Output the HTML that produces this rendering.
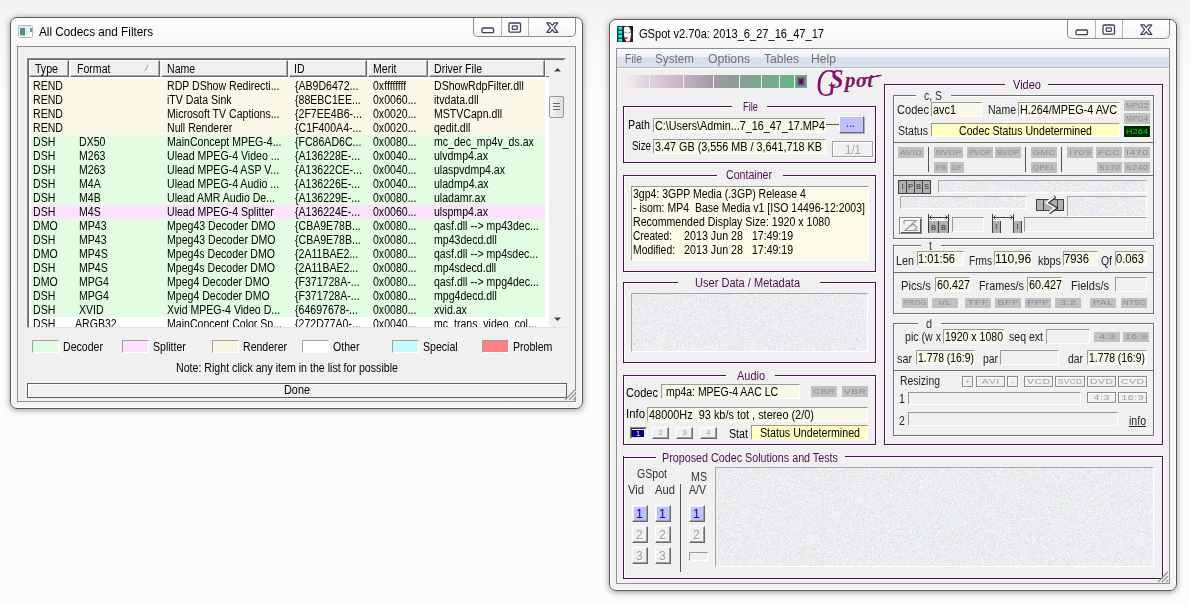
<!DOCTYPE html>
<html lang="en"><head><meta charset="utf-8"><title>GSpot</title><style>
html,body{margin:0;padding:0;background:#fff;}
body{width:1190px;height:606px;overflow:hidden;position:relative;font-family:"Liberation Sans",sans-serif;background:linear-gradient(#f1f1f1 0,#f9f9f9 45px,#fcfcfc 90px,#fcfcfc 100%);}
body *{position:absolute;box-sizing:content-box;}
.t{font:12px/14px "Liberation Sans",sans-serif;white-space:pre;transform-origin:0 0;color:#000;}
.ti{font:12px/15px "Liberation Sans",sans-serif;white-space:pre;transform-origin:0 0;color:#000;}
.bd{overflow:hidden;}
.bd b{position:absolute;left:-10px;right:-10px;top:50%;margin-top:-5px;text-align:center;font:normal 7.5px/10px "Liberation Sans",sans-serif;letter-spacing:.4px;text-indent:.4px;}
.logo{font:italic 17px/1 "Liberation Serif",serif;color:#86106a;white-space:pre;}
</style></head><body>
<svg width="0" height="0" style="left:0;top:0"><filter id="nzf" x="0" y="0" width="100%" height="100%" color-interpolation-filters="sRGB"><feTurbulence type="fractalNoise" baseFrequency="1.9 2.3" numOctaves="2" seed="7"/><feColorMatrix type="matrix" values="0.3 0 0 0 0.775  0 0.3 0 0 0.775  0 0 0.26 0 0.81  0 0 0 0 1"/></filter></svg>
<div style="left:10px;top:17px;width:571px;height:390px;border:1px solid #5a5a5a;border-radius:7px;background:linear-gradient(#fdfdfd,#f6f6f6 30px,#f3f3f3);box-shadow:0 1px 6px 0 rgba(0,0,0,.42), inset 0 0 0 1px #fff;"></div>
<div style="left:17px;top:46px;width:557px;height:354px;border:1px solid #8f8f8f;background:#f0f0f0;"></div>
<div style="left:473px;top:18px;width:101px;height:18px;border:1px solid #8c8c8c;border-top:none;border-radius:0 0 5px 5px;background:linear-gradient(#fff,#f6f6f6);box-shadow:0 1px 0 rgba(255,255,255,.8);"></div>
<div style="left:501px;top:18px;width:1px;height:18px;background:#b4b4b4;"></div>
<div style="left:528px;top:18px;width:1px;height:18px;background:#b4b4b4;"></div>
<svg style="left:480.5px;top:26.5px" width="14" height="7" viewBox="0 0 14 7"><rect x="1" y="1" width="11.500" height="4.600" rx="1.200" fill="#fff" stroke="#3c4258" stroke-width="1.300"/></svg>
<svg style="left:507.5px;top:21.5px" width="14" height="12" viewBox="0 0 14 12"><rect x="1" y="1" width="11.500" height="9.200" rx="1.200" fill="#fff" stroke="#3c4258" stroke-width="1.300"/><rect x="4.300" y="3.900" width="5" height="3.400" rx=".5" fill="#fff" stroke="#3c4258" stroke-width="1.200"/></svg>
<svg style="left:545.5px;top:21.5px" width="13" height="12" viewBox="0 0 13 12"><path d="M0.800 0.800h3.400l2.100 2.700 2.100-2.700h3.400l-3.700 4.800 3.700 4.800h-3.400l-2.100-2.700-2.100 2.700h-3.400l3.700-4.800z" fill="#fff" stroke="#3c4258" stroke-width="1.200" stroke-linejoin="round"/></svg>
<svg style="left:18px;top:25px" width="15" height="13" viewBox="0 0 15 13"><rect x="0.500" y="0.500" width="14" height="12" rx="1" fill="#fdfdfd" stroke="#b0b8c6"/><rect x="1" y="1" width="13" height="1.500" fill="#dfe4ec"/><defs><linearGradient id="ig" x1="0" y1="0" x2="0" y2="1"><stop offset="0" stop-color="#4d80ad"/><stop offset="1" stop-color="#49a25c"/></linearGradient></defs><rect x="2" y="3" width="5" height="7.500" fill="url(#ig)"/><rect x="8" y="3" width="2.500" height="7.500" fill="#e4e4e4"/><rect x="12" y="3" width="1.800" height="4" fill="url(#ig)"/></svg>
<span class="ti" style="left:39px;top:25px;transform:scaleX(0.977);">All Codecs and Filters</span>
<div style="left:27px;top:58px;width:537px;height:268px;border:1px solid #868686;border-right-color:#e3e3e3;border-bottom-color:#e3e3e3;background:#fff;overflow:hidden;"></div>
<div style="left:28px;top:59px;width:536px;height:0px;border-top:1px solid #696969;"></div>
<div style="left:28px;top:59px;width:0px;height:268px;border-left:1px solid #696969;"></div>
<div style="left:29px;top:60px;width:517px;height:17px;background:#f0f0f0;"></div>
<div style="left:29px;top:60px;width:38px;height:15px;border:1px solid #fff;border-right-color:#696969;border-bottom-color:#696969;box-shadow:inset -1px -1px 0 #a8a8a8;background:#f0f0f0;"></div>
<span class="t" style="left:35px;top:62px;transform:scaleX(0.880);">Type</span>
<div style="left:70px;top:60px;width:88px;height:15px;border:1px solid #fff;border-right-color:#696969;border-bottom-color:#696969;box-shadow:inset -1px -1px 0 #a8a8a8;background:#f0f0f0;"></div>
<span class="t" style="left:77px;top:62px;transform:scaleX(0.880);">Format</span>
<div style="left:161px;top:60px;width:125px;height:15px;border:1px solid #fff;border-right-color:#696969;border-bottom-color:#696969;box-shadow:inset -1px -1px 0 #a8a8a8;background:#f0f0f0;"></div>
<span class="t" style="left:167px;top:62px;transform:scaleX(0.880);">Name</span>
<div style="left:289px;top:60px;width:76px;height:15px;border:1px solid #fff;border-right-color:#696969;border-bottom-color:#696969;box-shadow:inset -1px -1px 0 #a8a8a8;background:#f0f0f0;"></div>
<span class="t" style="left:294px;top:62px;transform:scaleX(0.880);">ID</span>
<div style="left:368px;top:60px;width:58px;height:15px;border:1px solid #fff;border-right-color:#696969;border-bottom-color:#696969;box-shadow:inset -1px -1px 0 #a8a8a8;background:#f0f0f0;"></div>
<span class="t" style="left:373px;top:62px;transform:scaleX(0.880);">Merit</span>
<div style="left:429px;top:60px;width:114px;height:15px;border:1px solid #fff;border-right-color:#696969;border-bottom-color:#696969;box-shadow:inset -1px -1px 0 #a8a8a8;background:#f0f0f0;"></div>
<span class="t" style="left:434px;top:62px;transform:scaleX(0.880);">Driver File</span>
<div style="left:545px;top:60px;width:3px;height:16px;border-left:1px solid #fff;border-bottom:1px solid #696969;background:#f0f0f0;"></div>
<svg style="left:144px;top:64px" width="9" height="8" viewBox="0 0 9 8"><path d="M0.500 7.500L4.500 0.500" stroke="#a0a0a0" fill="none"/><path d="M4.500 0.500L8.500 7.500H0.500" stroke="#fff" fill="none"/></svg>
<div style="left:31px;top:79px;width:514px;height:14px;background:#fbf8e8;overflow:hidden;"><span class="t" style="left:2px;top:0;transform:scaleX(0.88)">REND</span><span class="t" style="left:136px;top:0;transform:scaleX(0.88)">RDP DShow Redirecti...</span><span class="t" style="left:264px;top:0;transform:scaleX(0.88)">{AB9D6472...</span><span class="t" style="left:342px;top:0;transform:scaleX(0.88)">0xffffffff</span><span class="t" style="left:403px;top:0;transform:scaleX(0.88)">DShowRdpFilter.dll</span></div>
<div style="left:31px;top:93px;width:514px;height:14px;background:#fbf8e8;overflow:hidden;"><span class="t" style="left:2px;top:0;transform:scaleX(0.88)">REND</span><span class="t" style="left:136px;top:0;transform:scaleX(0.88)">iTV Data Sink</span><span class="t" style="left:264px;top:0;transform:scaleX(0.88)">{88EBC1EE...</span><span class="t" style="left:342px;top:0;transform:scaleX(0.88)">0x0060...</span><span class="t" style="left:403px;top:0;transform:scaleX(0.88)">itvdata.dll</span></div>
<div style="left:31px;top:107px;width:514px;height:14px;background:#fbf8e8;overflow:hidden;"><span class="t" style="left:2px;top:0;transform:scaleX(0.88)">REND</span><span class="t" style="left:136px;top:0;transform:scaleX(0.88)">Microsoft TV Captions...</span><span class="t" style="left:264px;top:0;transform:scaleX(0.88)">{2F7EE4B6-...</span><span class="t" style="left:342px;top:0;transform:scaleX(0.88)">0x0020...</span><span class="t" style="left:403px;top:0;transform:scaleX(0.88)">MSTVCapn.dll</span></div>
<div style="left:31px;top:121px;width:514px;height:14px;background:#fbf8e8;overflow:hidden;"><span class="t" style="left:2px;top:0;transform:scaleX(0.88)">REND</span><span class="t" style="left:136px;top:0;transform:scaleX(0.88)">Null Renderer</span><span class="t" style="left:264px;top:0;transform:scaleX(0.88)">{C1F400A4-...</span><span class="t" style="left:342px;top:0;transform:scaleX(0.88)">0x0020...</span><span class="t" style="left:403px;top:0;transform:scaleX(0.88)">qedit.dll</span></div>
<div style="left:31px;top:135px;width:514px;height:14px;background:#e2fde2;overflow:hidden;"><span class="t" style="left:2px;top:0;transform:scaleX(0.88)">DSH</span><span class="t" style="left:48px;top:0;transform:scaleX(0.88)">DX50</span><span class="t" style="left:136px;top:0;transform:scaleX(0.88)">MainConcept MPEG-4...</span><span class="t" style="left:264px;top:0;transform:scaleX(0.88)">{FC86AD6C...</span><span class="t" style="left:342px;top:0;transform:scaleX(0.88)">0x0080...</span><span class="t" style="left:403px;top:0;transform:scaleX(0.88)">mc_dec_mp4v_ds.ax</span></div>
<div style="left:31px;top:149px;width:514px;height:14px;background:#e2fde2;overflow:hidden;"><span class="t" style="left:2px;top:0;transform:scaleX(0.88)">DSH</span><span class="t" style="left:48px;top:0;transform:scaleX(0.88)">M263</span><span class="t" style="left:136px;top:0;transform:scaleX(0.88)">Ulead MPEG-4 Video ...</span><span class="t" style="left:264px;top:0;transform:scaleX(0.88)">{A136228E-...</span><span class="t" style="left:342px;top:0;transform:scaleX(0.88)">0x0040...</span><span class="t" style="left:403px;top:0;transform:scaleX(0.88)">ulvdmp4.ax</span></div>
<div style="left:31px;top:163px;width:514px;height:14px;background:#e2fde2;overflow:hidden;"><span class="t" style="left:2px;top:0;transform:scaleX(0.88)">DSH</span><span class="t" style="left:48px;top:0;transform:scaleX(0.88)">M263</span><span class="t" style="left:136px;top:0;transform:scaleX(0.88)">Ulead MPEG-4 ASP V...</span><span class="t" style="left:264px;top:0;transform:scaleX(0.88)">{A13622CE-...</span><span class="t" style="left:342px;top:0;transform:scaleX(0.88)">0x0040...</span><span class="t" style="left:403px;top:0;transform:scaleX(0.88)">ulaspvdmp4.ax</span></div>
<div style="left:31px;top:177px;width:514px;height:14px;background:#e2fde2;overflow:hidden;"><span class="t" style="left:2px;top:0;transform:scaleX(0.88)">DSH</span><span class="t" style="left:48px;top:0;transform:scaleX(0.88)">M4A</span><span class="t" style="left:136px;top:0;transform:scaleX(0.88)">Ulead MPEG-4 Audio ...</span><span class="t" style="left:264px;top:0;transform:scaleX(0.88)">{A136226E-...</span><span class="t" style="left:342px;top:0;transform:scaleX(0.88)">0x0040...</span><span class="t" style="left:403px;top:0;transform:scaleX(0.88)">uladmp4.ax</span></div>
<div style="left:31px;top:191px;width:514px;height:14px;background:#e2fde2;overflow:hidden;"><span class="t" style="left:2px;top:0;transform:scaleX(0.88)">DSH</span><span class="t" style="left:48px;top:0;transform:scaleX(0.88)">M4B</span><span class="t" style="left:136px;top:0;transform:scaleX(0.88)">Ulead AMR Audio De...</span><span class="t" style="left:264px;top:0;transform:scaleX(0.88)">{A136229E-...</span><span class="t" style="left:342px;top:0;transform:scaleX(0.88)">0x0080...</span><span class="t" style="left:403px;top:0;transform:scaleX(0.88)">uladamr.ax</span></div>
<div style="left:31px;top:205px;width:514px;height:14px;background:#fde2fd;overflow:hidden;"><span class="t" style="left:2px;top:0;transform:scaleX(0.88)">DSH</span><span class="t" style="left:48px;top:0;transform:scaleX(0.88)">M4S</span><span class="t" style="left:136px;top:0;transform:scaleX(0.88)">Ulead MPEG-4 Splitter</span><span class="t" style="left:264px;top:0;transform:scaleX(0.88)">{A136224E-...</span><span class="t" style="left:342px;top:0;transform:scaleX(0.88)">0x0060...</span><span class="t" style="left:403px;top:0;transform:scaleX(0.88)">ulspmp4.ax</span></div>
<div style="left:31px;top:219px;width:514px;height:14px;background:#e2fde2;overflow:hidden;"><span class="t" style="left:2px;top:0;transform:scaleX(0.88)">DMO</span><span class="t" style="left:48px;top:0;transform:scaleX(0.88)">MP43</span><span class="t" style="left:136px;top:0;transform:scaleX(0.88)">Mpeg43 Decoder DMO</span><span class="t" style="left:264px;top:0;transform:scaleX(0.88)">{CBA9E78B...</span><span class="t" style="left:342px;top:0;transform:scaleX(0.88)">0x0080...</span><span class="t" style="left:403px;top:0;transform:scaleX(0.88)">qasf.dll --&gt; mp43dec...</span></div>
<div style="left:31px;top:233px;width:514px;height:14px;background:#e2fde2;overflow:hidden;"><span class="t" style="left:2px;top:0;transform:scaleX(0.88)">DSH</span><span class="t" style="left:48px;top:0;transform:scaleX(0.88)">MP43</span><span class="t" style="left:136px;top:0;transform:scaleX(0.88)">Mpeg43 Decoder DMO</span><span class="t" style="left:264px;top:0;transform:scaleX(0.88)">{CBA9E78B...</span><span class="t" style="left:342px;top:0;transform:scaleX(0.88)">0x0080...</span><span class="t" style="left:403px;top:0;transform:scaleX(0.88)">mp43decd.dll</span></div>
<div style="left:31px;top:247px;width:514px;height:14px;background:#e2fde2;overflow:hidden;"><span class="t" style="left:2px;top:0;transform:scaleX(0.88)">DMO</span><span class="t" style="left:48px;top:0;transform:scaleX(0.88)">MP4S</span><span class="t" style="left:136px;top:0;transform:scaleX(0.88)">Mpeg4s Decoder DMO</span><span class="t" style="left:264px;top:0;transform:scaleX(0.88)">{2A11BAE2...</span><span class="t" style="left:342px;top:0;transform:scaleX(0.88)">0x0080...</span><span class="t" style="left:403px;top:0;transform:scaleX(0.88)">qasf.dll --&gt; mp4sdec...</span></div>
<div style="left:31px;top:261px;width:514px;height:14px;background:#e2fde2;overflow:hidden;"><span class="t" style="left:2px;top:0;transform:scaleX(0.88)">DSH</span><span class="t" style="left:48px;top:0;transform:scaleX(0.88)">MP4S</span><span class="t" style="left:136px;top:0;transform:scaleX(0.88)">Mpeg4s Decoder DMO</span><span class="t" style="left:264px;top:0;transform:scaleX(0.88)">{2A11BAE2...</span><span class="t" style="left:342px;top:0;transform:scaleX(0.88)">0x0080...</span><span class="t" style="left:403px;top:0;transform:scaleX(0.88)">mp4sdecd.dll</span></div>
<div style="left:31px;top:275px;width:514px;height:14px;background:#e2fde2;overflow:hidden;"><span class="t" style="left:2px;top:0;transform:scaleX(0.88)">DMO</span><span class="t" style="left:48px;top:0;transform:scaleX(0.88)">MPG4</span><span class="t" style="left:136px;top:0;transform:scaleX(0.88)">Mpeg4 Decoder DMO</span><span class="t" style="left:264px;top:0;transform:scaleX(0.88)">{F371728A-...</span><span class="t" style="left:342px;top:0;transform:scaleX(0.88)">0x0080...</span><span class="t" style="left:403px;top:0;transform:scaleX(0.88)">qasf.dll --&gt; mpg4dec...</span></div>
<div style="left:31px;top:289px;width:514px;height:14px;background:#e2fde2;overflow:hidden;"><span class="t" style="left:2px;top:0;transform:scaleX(0.88)">DSH</span><span class="t" style="left:48px;top:0;transform:scaleX(0.88)">MPG4</span><span class="t" style="left:136px;top:0;transform:scaleX(0.88)">Mpeg4 Decoder DMO</span><span class="t" style="left:264px;top:0;transform:scaleX(0.88)">{F371728A-...</span><span class="t" style="left:342px;top:0;transform:scaleX(0.88)">0x0080...</span><span class="t" style="left:403px;top:0;transform:scaleX(0.88)">mpg4decd.dll</span></div>
<div style="left:31px;top:303px;width:514px;height:14px;background:#e2fde2;overflow:hidden;"><span class="t" style="left:2px;top:0;transform:scaleX(0.88)">DSH</span><span class="t" style="left:48px;top:0;transform:scaleX(0.88)">XVID</span><span class="t" style="left:136px;top:0;transform:scaleX(0.88)">Xvid MPEG-4 Video D...</span><span class="t" style="left:264px;top:0;transform:scaleX(0.88)">{64697678-...</span><span class="t" style="left:342px;top:0;transform:scaleX(0.88)">0x0080...</span><span class="t" style="left:403px;top:0;transform:scaleX(0.88)">xvid.ax</span></div>
<div style="left:31px;top:317px;width:514px;height:10px;background:#fff;overflow:hidden;"><span class="t" style="left:2px;top:0;transform:scaleX(0.88)">DSH</span><span class="t" style="left:44px;top:0;transform:scaleX(0.88)">ARGB32</span><span class="t" style="left:136px;top:0;transform:scaleX(0.88)">MainConcept Color Sp...</span><span class="t" style="left:264px;top:0;transform:scaleX(0.88)">{272D77A0-...</span><span class="t" style="left:342px;top:0;transform:scaleX(0.88)">0x0040...</span><span class="t" style="left:403px;top:0;transform:scaleX(0.88)">mc_trans_video_col...</span></div>
<div style="left:549px;top:60px;width:17px;height:267px;background:#f0f0f0;"></div>
<svg style="left:554px;top:67px" width="7" height="5" viewBox="0 0 9 6"><path d="M0 5.500L4.500 1 9 5.500z" fill="#444"/></svg>
<svg style="left:554px;top:317px" width="7" height="5" viewBox="0 0 9 6"><path d="M0 0.500L4.500 5 9 0.500z" fill="#444"/></svg>
<div style="left:549px;top:96px;width:13px;height:20px;border:1px solid #979797;border-radius:2px;background:linear-gradient(90deg,#f5f5f5,#dcdcdc);"></div>
<div style="left:553px;top:103px;width:7px;height:0px;border-top:1px solid #6a6a6a;"></div>
<div style="left:553px;top:106px;width:7px;height:0px;border-top:1px solid #6a6a6a;"></div>
<div style="left:553px;top:109px;width:7px;height:0px;border-top:1px solid #6a6a6a;"></div>
<div style="left:32px;top:340px;width:25px;height:11px;border:1px solid #a0a0a0;border-right-color:#fff;border-bottom-color:#fff;background:#e1fde1;"></div>
<span class="t" style="left:63px;top:340px;transform:scaleX(0.880);">Decoder</span>
<div style="left:122px;top:340px;width:25px;height:11px;border:1px solid #a0a0a0;border-right-color:#fff;border-bottom-color:#fff;background:#ffe1ff;"></div>
<span class="t" style="left:153px;top:340px;transform:scaleX(0.880);">Splitter</span>
<div style="left:212px;top:340px;width:25px;height:11px;border:1px solid #a0a0a0;border-right-color:#fff;border-bottom-color:#fff;background:#f8f5e1;"></div>
<span class="t" style="left:243px;top:340px;transform:scaleX(0.880);">Renderer</span>
<div style="left:302px;top:340px;width:25px;height:11px;border:1px solid #a0a0a0;border-right-color:#fff;border-bottom-color:#fff;background:#ffffff;"></div>
<span class="t" style="left:333px;top:340px;transform:scaleX(0.880);">Other</span>
<div style="left:392px;top:340px;width:25px;height:11px;border:1px solid #a0a0a0;border-right-color:#fff;border-bottom-color:#fff;background:#c4fbfd;"></div>
<span class="t" style="left:423px;top:340px;transform:scaleX(0.880);">Special</span>
<div style="left:482px;top:340px;width:25px;height:11px;border:1px solid #a0a0a0;border-right-color:#fff;border-bottom-color:#fff;background:#ff8080;"></div>
<span class="t" style="left:513px;top:340px;transform:scaleX(0.880);">Problem</span>
<span class="t" style="left:176px;top:361px;transform:scaleX(0.885);">Note: Right click any item in the list for possible</span>
<div style="left:27px;top:383px;width:538px;height:13px;border:1px solid #5f5f5f;background:#f0f0f0;box-shadow:inset 1px 1px 0 #fff;"></div>
<span class="t" style="left:284px;top:383px;transform:scaleX(0.906);">Done</span>
<svg style="left:564px;top:389px" width="12" height="12" viewBox="0 0 12 12"><path d="M11 1L1 11M11 5L5 11M11 9L9 11" stroke="#9a9a9a" stroke-width="1.500"/><path d="M12 2L2 12M12 6L6 12" stroke="#fff" stroke-width="1"/></svg>
<div style="left:609px;top:19px;width:566px;height:570px;border:1px solid #5a5a5a;border-radius:7px;background:linear-gradient(#fdfdfd,#f6f6f6 30px,#f3f3f3);box-shadow:0 1px 6px 0 rgba(0,0,0,.42), inset 0 0 0 1px #fff;"></div>
<div style="left:616px;top:48px;width:552px;height:534px;border:1px solid #8f8f8f;background:#f0f0f0;"></div>
<div style="left:1067px;top:20px;width:101px;height:18px;border:1px solid #8c8c8c;border-top:none;border-radius:0 0 5px 5px;background:linear-gradient(#fff,#f6f6f6);box-shadow:0 1px 0 rgba(255,255,255,.8);"></div>
<div style="left:1095px;top:20px;width:1px;height:18px;background:#b4b4b4;"></div>
<div style="left:1122px;top:20px;width:1px;height:18px;background:#b4b4b4;"></div>
<svg style="left:1074.5px;top:28.5px" width="14" height="7" viewBox="0 0 14 7"><rect x="1" y="1" width="11.500" height="4.600" rx="1.200" fill="#fff" stroke="#3c4258" stroke-width="1.300"/></svg>
<svg style="left:1101.5px;top:23.5px" width="14" height="12" viewBox="0 0 14 12"><rect x="1" y="1" width="11.500" height="9.200" rx="1.200" fill="#fff" stroke="#3c4258" stroke-width="1.300"/><rect x="4.300" y="3.900" width="5" height="3.400" rx=".5" fill="#fff" stroke="#3c4258" stroke-width="1.200"/></svg>
<svg style="left:1139.5px;top:23.5px" width="13" height="12" viewBox="0 0 13 12"><path d="M0.800 0.800h3.400l2.100 2.700 2.100-2.700h3.400l-3.700 4.800 3.700 4.800h-3.400l-2.100-2.700-2.100 2.700h-3.400l3.700-4.800z" fill="#fff" stroke="#3c4258" stroke-width="1.200" stroke-linejoin="round"/></svg>
<svg style="left:617px;top:26px" width="16" height="16" viewBox="0 0 16 16"><rect width="16" height="16" fill="#181818"/><rect width="6" height="16" fill="#0a4848"/><path d="M1.500 1h3.500v2.600h-3.500zM1.500 5h3.500v2.600h-3.500zM1.500 9h3.500v2.600h-3.500zM1.500 13h3.500v2.600h-3.500z" fill="#00ffff"/><path d="M7 1.500C9 0 13 0 13.800 4c.6 4 .2 8-1.300 11.500L9 15.500C7 12 6.500 6 7 1.500z" fill="#f6f6f6"/><path d="M12.500 1c2.500 1 3.500 4 3.500 8v7h-3c1.500-4 2-9 -.5-15z" fill="#2a2a2a"/><path d="M7.500 6.200l2 .5M11.500 6.700l2-.5" stroke="#2b7a7a" stroke-width="1"/><ellipse cx="9.300" cy="12.200" rx="1.600" ry=".9" fill="#ff1414"/></svg>
<span class="ti" style="left:639px;top:27px;transform:scaleX(0.924);">GSpot v2.70a: 2013_6_27_16_47_17</span>
<div style="left:617px;top:49px;width:552px;height:18px;background:linear-gradient(#fbfbfd 0,#eef0f8 42%,#d9deee 48%,#dde2f1 100%);border-bottom:1px solid #b3b9cd;box-shadow:0 1px 0 #fff;"></div>
<span class="ti" style="left:625px;top:52px;transform:scaleX(0.879);color:#707070;">File</span>
<span class="ti" style="left:655px;top:52px;transform:scaleX(0.975);color:#707070;">System</span>
<span class="ti" style="left:708px;top:52px;transform:scaleX(1.016);color:#707070;">Options</span>
<span class="ti" style="left:764px;top:52px;transform:scaleX(1.009);color:#707070;">Tables</span>
<span class="ti" style="left:811px;top:52px;transform:scaleX(1.013);color:#707070;">Help</span>
<div style="left:625px;top:75px;width:169px;height:13px;background:linear-gradient(90deg,#f0f0f0 0,#e3d3df 12%,#cdb9c9 30%,#a99aa9 50%,#8e9c97 65%,#79a88f 82%,#66b587 100%);"></div>
<div style="left:649px;top:75px;width:1px;height:13px;background:#f0f0f0;"></div>
<div style="left:683px;top:75px;width:1px;height:13px;background:#f0f0f0;"></div>
<div style="left:713px;top:75px;width:1px;height:13px;background:#f0f0f0;"></div>
<div style="left:739px;top:75px;width:1px;height:13px;background:#f0f0f0;"></div>
<div style="left:761px;top:75px;width:1px;height:13px;background:#f0f0f0;"></div>
<div style="left:779px;top:75px;width:1px;height:13px;background:#f0f0f0;"></div>
<div style="left:794px;top:75px;width:1px;height:13px;background:#f0f0f0;"></div>
<div style="left:795px;top:75px;width:12px;height:13px;background:#68b287;"></div>
<div style="left:796px;top:76px;width:10px;height:11px;background:#6b9a86;"></div>
<div style="left:797px;top:77px;width:8px;height:9px;background:#6c7682;"></div>
<div style="left:798px;top:78px;width:6px;height:7px;background:#6a4a74;"></div>
<div style="left:799px;top:79px;width:4px;height:5px;background:#641a5c;"></div>
<div style="left:800px;top:80px;width:2px;height:3px;background:#58064c;"></div>
<span class="logo" style="left:816px;top:63px;font-size:40px;transform:scaleX(.7);transform-origin:0 0;">G</span>
<span class="logo" style="left:830px;top:66px;font-size:27px;font-weight:bold;transform:scaleX(.9);transform-origin:0 0;">S</span>
<span class="logo" style="left:845px;top:70px;font-size:21px;font-weight:bold;letter-spacing:.6px;">pot</span>
<div style="left:862px;top:76px;width:20px;height:0px;border-top:2px solid #86106a;transform:rotate(-10deg);border-radius:1px;"></div>
<div style="left:623px;top:106px;width:251px;height:55px;border:1px solid #520c52;box-shadow:inset 1px 1px 0 #fff,1px 1px 0 #fff;"></div>
<div style="left:732px;top:105px;width:35px;height:4px;background:#f0f0f0;"></div>
<span class="t" style="left:743px;top:100px;transform:scaleX(0.776);color:#520c52;">File</span>
<span class="t" style="left:628px;top:118px;transform:scaleX(0.891);">Path</span>
<div style="left:653px;top:118px;width:171px;height:13px;border-top:1px solid #9a9a9a;border-left:1px solid #9a9a9a;border-right:1px solid #fff;border-bottom:1px solid #fff;background:#f9f9e8;"><span class="t" style="left:1px;top:0px;transform:scaleX(0.901);color:#000;">C:\Users\Admin...7_16_47_17.MP4</span></div>
<div style="left:826px;top:124px;width:13px;height:0px;border-top:1px solid #555;"></div>
<div style="left:839px;top:116px;width:23px;height:15px;border:1px solid #fff;border-right-color:#6a6a6a;border-bottom-color:#6a6a6a;background:#c0c0ff;box-shadow:1px 1px 0 #b0b0b0;"></div>
<span class="t" style="left:846px;top:116px;transform:scaleX(0.880);color:#2020c0;">...</span>
<span class="t" style="left:632px;top:139px;transform:scaleX(0.814);">Size</span>
<div style="left:653px;top:139px;width:171px;height:13px;border-top:1px solid #9a9a9a;border-left:1px solid #9a9a9a;border-right:1px solid #fff;border-bottom:1px solid #fff;background:#f9f9e8;"><span class="t" style="left:1px;top:0px;transform:scaleX(0.900);color:#000;">3.47 GB (3,556 MB / 3,641,718 KB</span></div>
<div style="left:832px;top:141px;width:39px;height:14px;border:1px solid #a0a0a0;box-shadow:1px 1px 0 #fff,inset 1px 1px 0 #fff;background:#f0f0f0;"><span class="t" style="left:11.5px;top:1px;transform:scaleX(0.959);color:#a8a8a8;">1/1</span></div>
<div style="left:623px;top:175px;width:251px;height:95px;border:1px solid #520c52;box-shadow:inset 1px 1px 0 #fff,1px 1px 0 #fff;"></div>
<div style="left:717px;top:174px;width:66px;height:4px;background:#f0f0f0;"></div>
<span class="t" style="left:726px;top:168px;transform:scaleX(0.884);color:#520c52;">Container</span>
<div style="left:631px;top:186px;width:236px;height:73px;border-top:1px solid #9a9a9a;border-left:1px solid #9a9a9a;border-right:1px solid #fff;border-bottom:1px solid #fff;background:#fbfbe8;"></div>
<span class="t" style="left:633px;top:187px;transform:scaleX(0.877);">3gp4: 3GPP Media (.3GP) Release 4</span>
<span class="t" style="left:633px;top:201px;transform:scaleX(0.876);">- isom: MP4  Base Media v1 [ISO 14496-12:2003]</span>
<span class="t" style="left:633px;top:215px;transform:scaleX(0.882);">Recommended Display Size: 1920 x 1080</span>
<span class="t" style="left:633px;top:229px;transform:scaleX(0.847);">Created:</span>
<span class="t" style="left:684px;top:229px;transform:scaleX(0.893);">2013 Jun 28</span>
<span class="t" style="left:752px;top:229px;transform:scaleX(0.878);">17:49:19</span>
<span class="t" style="left:633px;top:243px;transform:scaleX(0.863);">Modified:</span>
<span class="t" style="left:684px;top:243px;transform:scaleX(0.893);">2013 Jun 28</span>
<span class="t" style="left:752px;top:243px;transform:scaleX(0.878);">17:49:19</span>
<div style="left:623px;top:282px;width:251px;height:79px;border:1px solid #520c52;box-shadow:inset 1px 1px 0 #fff,1px 1px 0 #fff;"></div>
<div style="left:678px;top:281px;width:142px;height:4px;background:#f0f0f0;"></div>
<span class="t" style="left:695px;top:276px;transform:scaleX(0.921);color:#520c52;">User Data / Metadata</span>
<div class="nz" style="left:631px;top:293px;width:235px;height:57px;border-top:1px solid #a8a8a8;border-left:1px solid #a8a8a8;border-right:1px solid #fff;border-bottom:1px solid #fff;background:#e9e9ef;"><svg width="235" height="57" style="left:0;top:0"><rect width="235" height="57" filter="url(#nzf)"/></svg></div>
<div style="left:623px;top:375px;width:251px;height:68px;border:1px solid #520c52;box-shadow:inset 1px 1px 0 #fff,1px 1px 0 #fff;"></div>
<div style="left:726px;top:374px;width:49px;height:4px;background:#f0f0f0;"></div>
<span class="t" style="left:737px;top:369px;transform:scaleX(0.912);color:#520c52;">Audio</span>
<span class="t" style="left:626px;top:386px;transform:scaleX(0.923);">Codec</span>
<div style="left:661px;top:384px;width:137px;height:13px;border-top:1px solid #9a9a9a;border-left:1px solid #9a9a9a;border-right:1px solid #fff;border-bottom:1px solid #fff;background:#f9f9e8;"><span class="t" style="left:4px;top:0px;transform:scaleX(0.870);color:#000;">mp4a: MPEG-4 AAC LC</span></div>
<div class="bd" style="left:811px;top:386px;width:26px;height:11px;background:#c0c0c0;color:#8a8a8a;"><b style="transform:scaleX(1.32)">CBR</b></div>
<div class="bd" style="left:842px;top:386px;width:26px;height:11px;background:#c0c0c0;color:#8a8a8a;"><b style="transform:scaleX(1.35)">VBR</b></div>
<span class="t" style="left:626px;top:407px;transform:scaleX(0.949);">Info</span>
<div style="left:647px;top:407px;width:219px;height:13px;border-top:1px solid #9a9a9a;border-left:1px solid #9a9a9a;border-right:1px solid #fff;border-bottom:1px solid #fff;background:#f9f9e8;"><span class="t" style="left:1px;top:0px;transform:scaleX(0.909);color:#000;">48000Hz  93 kb/s tot , stereo (2/0)</span></div>
<div style="left:630px;top:427px;width:15px;height:10px;border:1px solid #808080;border-right-color:#fff;border-bottom-color:#fff;background:#f0f0f0;"></div>
<div style="left:631px;top:428px;width:13px;height:8px;border:1px solid #404040;border-right-color:#e0e0e0;border-bottom-color:#e0e0e0;"></div>
<div class="bd" style="left:632px;top:430px;width:12px;height:7px;background:#000080;"><b style="color:#fff">1</b></div>
<div class="bd" style="left:652px;top:427px;width:15px;height:10px;border:1px solid #fff;border-right-color:#696969;border-bottom-color:#696969;box-shadow:inset -1px -1px 0 #a0a0a0;color:#a0a0a0;"><b>2</b></div>
<div class="bd" style="left:676px;top:427px;width:15px;height:10px;border:1px solid #fff;border-right-color:#696969;border-bottom-color:#696969;box-shadow:inset -1px -1px 0 #a0a0a0;color:#a0a0a0;"><b>3</b></div>
<div class="bd" style="left:700px;top:427px;width:15px;height:10px;border:1px solid #fff;border-right-color:#696969;border-bottom-color:#696969;box-shadow:inset -1px -1px 0 #a0a0a0;color:#a0a0a0;"><b>4</b></div>
<span class="t" style="left:729px;top:427px;transform:scaleX(0.890);">Stat</span>
<div style="left:751px;top:425px;width:115px;height:13px;border-top:1px solid #9a9a9a;border-left:1px solid #9a9a9a;border-right:1px solid #fff;border-bottom:1px solid #fff;background:#ffffc0;"><span class="t" style="left:7.5px;top:0px;transform:scaleX(0.887);color:#000;">Status Undetermined</span></div>
<div style="left:623px;top:456px;width:538px;height:121px;border:1px solid #520c52;box-shadow:inset 1px 1px 0 #fff,1px 1px 0 #fff;"></div>
<div style="left:656px;top:455px;width:189px;height:4px;background:#f0f0f0;"></div>
<span class="t" style="left:662px;top:451px;transform:scaleX(0.895);color:#520c52;">Proposed Codec Solutions and Tests</span>
<div style="left:624px;top:456px;width:32px;height:1px;background:#f0f0f0;"></div>
<div style="left:624px;top:457px;width:32px;height:1px;background:#520c52;"></div>
<div style="left:624px;top:458px;width:32px;height:1px;background:#fff;"></div>
<span class="t" style="left:637px;top:467px;transform:scaleX(0.882);color:#333;">GSpot</span>
<span class="t" style="left:628px;top:483px;transform:scaleX(0.934);color:#333;">Vid</span>
<span class="t" style="left:655px;top:483px;transform:scaleX(0.937);color:#333;">Aud</span>
<span class="t" style="left:691px;top:470px;transform:scaleX(0.889);color:#333;">MS</span>
<span class="t" style="left:689px;top:483px;transform:scaleX(0.879);color:#333;">A/V</span>
<div style="left:680px;top:484px;width:0px;height:88px;border-left:1px solid #555;"></div>
<div style="left:632px;top:505px;width:14px;height:15px;border:1px solid #fff;border-right-color:#696969;border-bottom-color:#696969;box-shadow:inset -1px -1px 0 #a0a0a0;background:#f0f0f0;"></div>
<div style="left:634px;top:507px;width:12px;height:13px;background:#c0c0ff;"></div>
<span class="t" style="left:636px;top:507px;transform:scaleX(1.000);color:#000080;">1</span>
<div style="left:632px;top:526px;width:14px;height:15px;border:1px solid #fff;border-right-color:#696969;border-bottom-color:#696969;box-shadow:inset -1px -1px 0 #a0a0a0;background:#f0f0f0;"></div>
<span class="t" style="left:637px;top:529px;transform:scaleX(1.000);color:#fff;">2</span>
<span class="t" style="left:636px;top:528px;transform:scaleX(1.000);color:#a0a0a0;">2</span>
<div style="left:632px;top:547px;width:14px;height:15px;border:1px solid #fff;border-right-color:#696969;border-bottom-color:#696969;box-shadow:inset -1px -1px 0 #a0a0a0;background:#f0f0f0;"></div>
<span class="t" style="left:637px;top:550px;transform:scaleX(1.000);color:#fff;">3</span>
<span class="t" style="left:636px;top:549px;transform:scaleX(1.000);color:#a0a0a0;">3</span>
<div style="left:655px;top:505px;width:14px;height:15px;border:1px solid #fff;border-right-color:#696969;border-bottom-color:#696969;box-shadow:inset -1px -1px 0 #a0a0a0;background:#f0f0f0;"></div>
<div style="left:657px;top:507px;width:12px;height:13px;background:#c0c0ff;"></div>
<span class="t" style="left:659px;top:507px;transform:scaleX(1.000);color:#000080;">1</span>
<div style="left:655px;top:526px;width:14px;height:15px;border:1px solid #fff;border-right-color:#696969;border-bottom-color:#696969;box-shadow:inset -1px -1px 0 #a0a0a0;background:#f0f0f0;"></div>
<span class="t" style="left:660px;top:529px;transform:scaleX(1.000);color:#fff;">2</span>
<span class="t" style="left:659px;top:528px;transform:scaleX(1.000);color:#a0a0a0;">2</span>
<div style="left:655px;top:547px;width:14px;height:15px;border:1px solid #fff;border-right-color:#696969;border-bottom-color:#696969;box-shadow:inset -1px -1px 0 #a0a0a0;background:#f0f0f0;"></div>
<span class="t" style="left:660px;top:550px;transform:scaleX(1.000);color:#fff;">3</span>
<span class="t" style="left:659px;top:549px;transform:scaleX(1.000);color:#a0a0a0;">3</span>
<div style="left:689px;top:505px;width:14px;height:15px;border:1px solid #fff;border-right-color:#696969;border-bottom-color:#696969;box-shadow:inset -1px -1px 0 #a0a0a0;background:#f0f0f0;"></div>
<div style="left:691px;top:507px;width:12px;height:13px;background:#c0c0ff;"></div>
<span class="t" style="left:693px;top:507px;transform:scaleX(1.000);color:#000080;">1</span>
<div style="left:689px;top:526px;width:14px;height:15px;border:1px solid #fff;border-right-color:#696969;border-bottom-color:#696969;box-shadow:inset -1px -1px 0 #a0a0a0;background:#f0f0f0;"></div>
<span class="t" style="left:694px;top:529px;transform:scaleX(1.000);color:#fff;">2</span>
<span class="t" style="left:693px;top:528px;transform:scaleX(1.000);color:#a0a0a0;">2</span>
<div style="left:689px;top:552px;width:17px;height:7px;border:1px solid #9a9a9a;border-right-color:#fff;border-bottom-color:#fff;"></div>
<div class="nz" style="left:715px;top:467px;width:437px;height:98px;border-top:1px solid #a8a8a8;border-left:1px solid #a8a8a8;border-right:1px solid #fff;border-bottom:1px solid #fff;background:#e9e9ef;"><svg width="437" height="98" style="left:0;top:0"><rect width="437" height="98" filter="url(#nzf)"/></svg></div>
<svg style="left:1157px;top:571px" width="12" height="12" viewBox="0 0 12 12"><path d="M11 1L1 11M11 5L5 11M11 9L9 11" stroke="#9a9a9a" stroke-width="1.500"/><path d="M12 2L2 12M12 6L6 12" stroke="#fff" stroke-width="1"/></svg>
<div style="left:884px;top:84px;width:277px;height:359px;border:1px solid #520c52;box-shadow:inset 1px 1px 0 #fff,1px 1px 0 #fff;"></div>
<div style="left:1005px;top:83px;width:43px;height:4px;background:#f0f0f0;"></div>
<span class="t" style="left:1013px;top:78px;transform:scaleX(0.919);color:#520c52;">Video</span>
<div style="left:893px;top:95px;width:259px;height:142px;border:1px solid #6e6e6e;box-shadow:inset 1px 1px 0 #fff,1px 1px 0 #fff;"></div>
<div style="left:916px;top:94px;width:35px;height:4px;background:#f0f0f0;"></div>
<span class="t" style="left:924px;top:89px;transform:scaleX(0.871);color:#333;">c, S</span>
<div style="left:894px;top:142px;width:259px;height:0px;border-top:1px solid #6e6e6e;"></div>
<div style="left:894px;top:175px;width:259px;height:0px;border-top:1px solid #6e6e6e;"></div>
<span class="t" style="left:897px;top:103px;transform:scaleX(0.923);color:#222;">Codec</span>
<div style="left:931px;top:102px;width:49px;height:13px;border-top:1px solid #9a9a9a;border-left:1px solid #9a9a9a;border-right:1px solid #fff;border-bottom:1px solid #fff;background:#f9f9e8;"><span class="t" style="left:1px;top:0px;transform:scaleX(0.907);color:#000;">avc1</span></div>
<span class="t" style="left:988px;top:103px;transform:scaleX(0.875);color:#222;">Name</span>
<div style="left:1018px;top:102px;width:100px;height:13px;border-top:1px solid #9a9a9a;border-left:1px solid #9a9a9a;border-right:1px solid #fff;border-bottom:1px solid #fff;background:#f9f9e8;"><span class="t" style="left:1px;top:0px;transform:scaleX(0.900);color:#000;">H.264/MPEG-4 AVC</span></div>
<div class="bd" style="left:1124px;top:100px;width:26px;height:11px;background:#c0c0c0;color:#8a8a8a;"><b style="transform:scaleX(0.98)">MPG2</b></div>
<div class="bd" style="left:1124px;top:113px;width:26px;height:11px;background:#c0c0c0;color:#8a8a8a;"><b style="transform:scaleX(0.98)">MPG4</b></div>
<div class="bd" style="left:1124px;top:126px;width:26px;height:11px;background:#002a00;color:#00e020;"><b style="transform:scaleX(1.15)">H264</b></div>
<span class="t" style="left:898px;top:124px;transform:scaleX(0.882);color:#222;">Status</span>
<div style="left:931px;top:123px;width:187px;height:12px;border-top:1px solid #9a9a9a;border-left:1px solid #9a9a9a;border-right:1px solid #fff;border-bottom:1px solid #fff;background:#ffffc0;"><span class="t" style="left:27.0px;top:0px;transform:scaleX(0.882);color:#000;">Codec Status Undetermined</span></div>
<div class="bd" style="left:898px;top:147px;width:26px;height:11px;background:#c0c0c0;color:#8a8a8a;"><b style="transform:scaleX(1.21)">AVID</b></div>
<div style="left:928px;top:147px;width:0px;height:25px;border-left:1px solid #555;"></div>
<div class="bd" style="left:934px;top:147px;width:29px;height:11px;background:#c0c0c0;color:#8a8a8a;"><b style="transform:scaleX(1.12)">NVOP</b></div>
<div class="bd" style="left:967px;top:147px;width:26px;height:11px;background:#c0c0c0;color:#8a8a8a;"><b style="transform:scaleX(1.00)">PVOP</b></div>
<div class="bd" style="left:995px;top:147px;width:26px;height:11px;background:#c0c0c0;color:#8a8a8a;"><b style="transform:scaleX(1.00)">BVOP</b></div>
<div class="bd" style="left:934px;top:162px;width:14px;height:11px;background:#c0c0c0;color:#8a8a8a;"><b style="transform:scaleX(0.97)">PB</b></div>
<div class="bd" style="left:950px;top:162px;width:14px;height:11px;background:#c0c0c0;color:#8a8a8a;"><b style="transform:scaleX(0.97)">DF</b></div>
<div style="left:1025px;top:147px;width:0px;height:25px;border-left:1px solid #555;"></div>
<div class="bd" style="left:1031px;top:147px;width:26px;height:11px;background:#c0c0c0;color:#8a8a8a;"><b style="transform:scaleX(1.20)">GMC</b></div>
<div class="bd" style="left:1031px;top:162px;width:26px;height:11px;background:#c0c0c0;color:#8a8a8a;"><b style="transform:scaleX(1.04)">QPEL</b></div>
<div style="left:1061px;top:147px;width:0px;height:25px;border-left:1px solid #555;"></div>
<div class="bd" style="left:1067px;top:147px;width:26px;height:11px;background:#c0c0c0;color:#8a8a8a;"><b style="transform:scaleX(1.39)">I709</b></div>
<div class="bd" style="left:1096px;top:147px;width:26px;height:11px;background:#c0c0c0;color:#8a8a8a;"><b style="transform:scaleX(1.35)">FCC</b></div>
<div class="bd" style="left:1124px;top:147px;width:26px;height:11px;background:#c0c0c0;color:#8a8a8a;"><b style="transform:scaleX(1.39)">I470</b></div>
<div class="bd" style="left:1097px;top:162px;width:25px;height:11px;background:#c0c0c0;color:#8a8a8a;"><b style="transform:scaleX(1.12)">S170</b></div>
<div class="bd" style="left:1124px;top:162px;width:26px;height:11px;background:#c0c0c0;color:#8a8a8a;"><b style="transform:scaleX(1.18)">S240</b></div>
<div style="left:898px;top:180px;width:31px;height:12px;border:1px solid #404040;background:#b0b0b0;"></div>
<div class="bd" style="left:899px;top:181px;width:7px;height:12px;color:#303030;"><b>I</b></div>
<div class="bd" style="left:907px;top:181px;width:7px;height:12px;color:#303030;"><b>P</b></div>
<div style="left:906px;top:181px;width:1px;height:12px;background:#404040;"></div>
<div class="bd" style="left:915px;top:181px;width:7px;height:12px;color:#303030;"><b>B</b></div>
<div style="left:914px;top:181px;width:1px;height:12px;background:#404040;"></div>
<div class="bd" style="left:923px;top:181px;width:7px;height:12px;color:#303030;"><b>S</b></div>
<div style="left:922px;top:181px;width:1px;height:12px;background:#404040;"></div>
<div class="nz" style="left:938px;top:180px;width:207px;height:11px;border-top:1px solid #a8a8a8;border-left:1px solid #a8a8a8;border-right:1px solid #fff;border-bottom:1px solid #fff;background:#e9e9ef;"><svg width="207" height="11" style="left:0;top:0"><rect width="207" height="11" filter="url(#nzf)"/></svg></div>
<div class="nz" style="left:900px;top:196px;width:125px;height:11px;border-top:1px solid #a8a8a8;border-left:1px solid #a8a8a8;border-right:1px solid #fff;border-bottom:1px solid #fff;background:#e9e9ef;"><svg width="125" height="11" style="left:0;top:0"><rect width="125" height="11" filter="url(#nzf)"/></svg></div>
<div class="nz" style="left:1067px;top:196px;width:78px;height:19px;border-top:1px solid #a8a8a8;border-left:1px solid #a8a8a8;border-right:1px solid #fff;border-bottom:1px solid #fff;background:#e9e9ef;"><svg width="78" height="19" style="left:0;top:0"><rect width="78" height="19" filter="url(#nzf)"/></svg></div>
<svg style="left:1035px;top:195px" width="31" height="19" viewBox="0 0 31 19"><rect x="1.500" y="4.500" width="27" height="11" fill="#b0b0b0" stroke="#404040"/><path d="M8.500 4.500v11M22.500 4.500v11" stroke="#404040"/><path d="M20.300 1.500L12 8l8.500 5-6.500 5" fill="none" stroke="#303030" stroke-width="3.200"/><path d="M19.300 1.500L11 8l8.500 5-6.500 5" fill="none" stroke="#fff" stroke-width="2"/></svg>
<div style="left:899px;top:217px;width:21px;height:15px;border:1px solid #8a8a8a;box-shadow:inset 1px 1px 0 #fff,inset -1px -1px 0 #5a5a5a;background:#f2f2f2;"></div>
<svg style="left:901px;top:219px" width="19" height="13" viewBox="0 0 19 13"><path d="M3 1.500h12L4 11.500h13M9 7l4-1.500 3 3-2.500 2.500M3 1.500v4" fill="none" stroke="#9a9a9a" stroke-width="1.200"/></svg>
<div style="left:929px;top:221px;width:19px;height:12px;background:#b0b0b0;"></div>
<div style="left:928px;top:214px;width:1px;height:19px;background:#404040;"></div>
<div style="left:938px;top:221px;width:1px;height:12px;background:#404040;"></div>
<div style="left:948px;top:214px;width:1px;height:19px;background:#404040;"></div>
<svg style="left:928px;top:214px" width="21" height="7" viewBox="0 0 21 7"><path d="M1 3.500H20M3.500 1.500L1.500 3.500l2 2M17.5 1.500l2 2-2 2" stroke="#404040" fill="none"/></svg>
<div class="bd" style="left:929px;top:222px;width:9px;height:11px;color:#303030;"><b>B</b></div>
<div class="bd" style="left:939px;top:222px;width:9px;height:11px;color:#303030;"><b>B</b></div>
<div class="bd" style="left:993px;top:221px;width:7px;height:12px;background:#b0b0b0;color:#303030;"><b>I</b></div>
<div class="bd" style="left:1014px;top:221px;width:7px;height:12px;background:#b0b0b0;color:#303030;"><b>I</b></div>
<div style="left:992px;top:214px;width:1px;height:19px;background:#404040;"></div>
<div style="left:1000px;top:221px;width:1px;height:12px;background:#404040;"></div>
<div style="left:1013px;top:214px;width:1px;height:19px;background:#404040;"></div>
<div style="left:1021px;top:221px;width:1px;height:12px;background:#404040;"></div>
<svg style="left:992px;top:214px" width="22" height="7" viewBox="0 0 22 7"><path d="M1 3.500H21M3.500 1.500L1.500 3.500l2 2M18.5 1.500l2 2-2 2" stroke="#404040" fill="none"/></svg>
<div style="left:952px;top:217px;width:30px;height:13px;border-top:1px solid #9a9a9a;border-left:1px solid #9a9a9a;border-right:1px solid #fff;border-bottom:1px solid #fff;background:#f0f0f0;"></div>
<div style="left:1024px;top:217px;width:121px;height:13px;border-top:1px solid #9a9a9a;border-left:1px solid #9a9a9a;border-right:1px solid #fff;border-bottom:1px solid #fff;background:#f0f0f0;"></div>
<div style="left:893px;top:245px;width:259px;height:67px;border:1px solid #6e6e6e;box-shadow:inset 1px 1px 0 #fff,1px 1px 0 #fff;"></div>
<div style="left:921px;top:244px;width:20px;height:4px;background:#f0f0f0;"></div>
<span class="t" style="left:929px;top:239px;transform:scaleX(0.900);color:#333;">t</span>
<div style="left:894px;top:272px;width:259px;height:0px;border-top:1px solid #6e6e6e;"></div>
<span class="t" style="left:896px;top:254px;transform:scaleX(0.899);color:#222;">Len</span>
<div style="left:917px;top:251px;width:45px;height:13px;border-top:1px solid #9a9a9a;border-left:1px solid #9a9a9a;border-right:1px solid #fff;border-bottom:1px solid #fff;background:#f9f9e8;"><span class="t" style="left:0px;top:0px;transform:scaleX(0.924);color:#000;">1:01:56</span></div>
<span class="t" style="left:969px;top:254px;transform:scaleX(0.842);color:#222;">Frms</span>
<div style="left:994px;top:251px;width:36px;height:13px;border-top:1px solid #9a9a9a;border-left:1px solid #9a9a9a;border-right:1px solid #fff;border-bottom:1px solid #fff;background:#f9f9e8;overflow:hidden;"><span class="t" style="left:0px;top:0px;transform:scaleX(1.012);color:#000;">110,964</span></div>
<span class="t" style="left:1038px;top:254px;transform:scaleX(0.907);color:#222;">kbps</span>
<div style="left:1063px;top:251px;width:33px;height:13px;border-top:1px solid #9a9a9a;border-left:1px solid #9a9a9a;border-right:1px solid #fff;border-bottom:1px solid #fff;background:#f9f9e8;"><span class="t" style="left:0px;top:0px;transform:scaleX(0.937);color:#000;">7936</span></div>
<span class="t" style="left:1101px;top:254px;transform:scaleX(0.868);color:#222;">Qf</span>
<div style="left:1115px;top:251px;width:30px;height:13px;border-top:1px solid #9a9a9a;border-left:1px solid #9a9a9a;border-right:1px solid #fff;border-bottom:1px solid #fff;background:#f9f9e8;"><span class="t" style="left:0px;top:0px;transform:scaleX(0.932);color:#000;">0.063</span></div>
<span class="t" style="left:901px;top:279px;transform:scaleX(0.937);color:#222;">Pics/s</span>
<div style="left:935px;top:277px;width:33px;height:13px;border-top:1px solid #9a9a9a;border-left:1px solid #9a9a9a;border-right:1px solid #fff;border-bottom:1px solid #fff;background:#f9f9e8;"><span class="t" style="left:1px;top:0px;transform:scaleX(0.899);color:#000;">60.427</span></div>
<span class="t" style="left:979px;top:279px;transform:scaleX(0.900);color:#222;">Frames/s</span>
<div style="left:1027px;top:277px;width:33px;height:13px;border-top:1px solid #9a9a9a;border-left:1px solid #9a9a9a;border-right:1px solid #fff;border-bottom:1px solid #fff;background:#f9f9e8;"><span class="t" style="left:1px;top:0px;transform:scaleX(0.899);color:#000;">60.427</span></div>
<span class="t" style="left:1071px;top:279px;transform:scaleX(0.919);color:#222;">Fields/s</span>
<div style="left:1115px;top:277px;width:30px;height:13px;border-top:1px solid #9a9a9a;border-left:1px solid #9a9a9a;border-right:1px solid #fff;border-bottom:1px solid #fff;background:#f0f0f0;"></div>
<div class="bd" style="left:902px;top:298px;width:26px;height:10px;background:#c0c0c0;color:#8a8a8a;"><b style="transform:scaleX(0.95)">PROG</b></div>
<div class="bd" style="left:932px;top:298px;width:26px;height:10px;background:#c0c0c0;color:#8a8a8a;"><b style="transform:scaleX(1.40)">I/L</b></div>
<div class="bd" style="left:965px;top:298px;width:26px;height:10px;background:#c0c0c0;color:#8a8a8a;"><b style="transform:scaleX(1.40)">TFF</b></div>
<div class="bd" style="left:995px;top:298px;width:26px;height:10px;background:#c0c0c0;color:#8a8a8a;"><b style="transform:scaleX(1.40)">BFF</b></div>
<div class="bd" style="left:1025px;top:298px;width:26px;height:10px;background:#c0c0c0;color:#8a8a8a;"><b style="transform:scaleX(1.40)">PPF</b></div>
<div class="bd" style="left:1055px;top:298px;width:26px;height:10px;background:#c0c0c0;color:#8a8a8a;"><b style="transform:scaleX(1.40)">3:2</b></div>
<div class="bd" style="left:1090px;top:298px;width:26px;height:10px;background:#c0c0c0;color:#8a8a8a;"><b style="transform:scaleX(1.40)">PAL</b></div>
<div class="bd" style="left:1121px;top:298px;width:26px;height:10px;background:#c0c0c0;color:#8a8a8a;"><b style="transform:scaleX(1.02)">NTSC</b></div>
<div style="left:893px;top:323px;width:259px;height:111px;border:1px solid #6e6e6e;box-shadow:inset 1px 1px 0 #fff,1px 1px 0 #fff;"></div>
<div style="left:918px;top:322px;width:23px;height:4px;background:#f0f0f0;"></div>
<span class="t" style="left:926px;top:317px;transform:scaleX(0.899);color:#333;">d</span>
<div style="left:894px;top:370px;width:259px;height:0px;border-top:1px solid #6e6e6e;"></div>
<span class="t" style="left:905px;top:330px;transform:scaleX(0.885);color:#222;">pic (w x</span>
<div style="left:943px;top:329px;width:60px;height:13px;border-top:1px solid #9a9a9a;border-left:1px solid #9a9a9a;border-right:1px solid #fff;border-bottom:1px solid #fff;background:#f9f9e8;"><span class="t" style="left:1px;top:0px;transform:scaleX(0.878);color:#000;">1920 x 1080</span></div>
<span class="t" style="left:1009px;top:330px;transform:scaleX(0.879);color:#222;">seq ext</span>
<div style="left:1046px;top:329px;width:42px;height:13px;border-top:1px solid #9a9a9a;border-left:1px solid #9a9a9a;border-right:1px solid #fff;border-bottom:1px solid #fff;background:#f0f0f0;"></div>
<div class="bd" style="left:1094px;top:332px;width:26px;height:10px;background:#c0c0c0;color:#8a8a8a;"><b style="transform:scaleX(1.40)">4:3</b></div>
<div class="bd" style="left:1123px;top:332px;width:26px;height:10px;background:#c0c0c0;color:#8a8a8a;"><b style="transform:scaleX(1.39)">16:9</b></div>
<span class="t" style="left:897px;top:352px;transform:scaleX(0.900);color:#222;">sar</span>
<div style="left:916px;top:350px;width:57px;height:13px;border-top:1px solid #9a9a9a;border-left:1px solid #9a9a9a;border-right:1px solid #fff;border-bottom:1px solid #fff;background:#f9f9e8;"><span class="t" style="left:1px;top:0px;transform:scaleX(0.865);color:#000;">1.778 (16:9)</span></div>
<span class="t" style="left:983px;top:352px;transform:scaleX(0.865);color:#222;">par</span>
<div style="left:1000px;top:350px;width:57px;height:13px;border-top:1px solid #9a9a9a;border-left:1px solid #9a9a9a;border-right:1px solid #fff;border-bottom:1px solid #fff;background:#f0f0f0;"></div>
<span class="t" style="left:1068px;top:352px;transform:scaleX(0.865);color:#222;">dar</span>
<div style="left:1087px;top:350px;width:58px;height:13px;border-top:1px solid #9a9a9a;border-left:1px solid #9a9a9a;border-right:1px solid #fff;border-bottom:1px solid #fff;background:#f9f9e8;"><span class="t" style="left:1px;top:0px;transform:scaleX(0.865);color:#000;">1.778 (16:9)</span></div>
<span class="t" style="left:900px;top:374px;transform:scaleX(0.869);color:#222;">Resizing</span>
<div class="bd" style="left:962px;top:376px;width:9px;height:9px;border:1px solid #8c8c8c;color:#a0a0a0;box-shadow:1px 1px 0 #fff,inset 1px 1px 0 #fff;"><b style="transform:scaleX(1.15)">+</b></div>
<div class="bd" style="left:976px;top:376px;width:27px;height:9px;border:1px solid #8c8c8c;color:#a0a0a0;box-shadow:1px 1px 0 #fff,inset 1px 1px 0 #fff;"><b style="transform:scaleX(1.40)">AVI</b></div>
<div class="bd" style="left:1007px;top:376px;width:9px;height:9px;border:1px solid #8c8c8c;color:#a0a0a0;box-shadow:1px 1px 0 #fff,inset 1px 1px 0 #fff;"><b style="transform:scaleX(1.40)">-</b></div>
<div class="bd" style="left:1024px;top:376px;width:27px;height:9px;border:1px solid #8c8c8c;color:#a0a0a0;box-shadow:1px 1px 0 #fff,inset 1px 1px 0 #fff;"><b style="transform:scaleX(1.38)">VCD</b></div>
<div class="bd" style="left:1055px;top:376px;width:28px;height:9px;border:1px solid #8c8c8c;color:#a0a0a0;box-shadow:1px 1px 0 #fff,inset 1px 1px 0 #fff;"><b style="transform:scaleX(1.09)">SVCD</b></div>
<div class="bd" style="left:1087px;top:376px;width:27px;height:9px;border:1px solid #8c8c8c;color:#a0a0a0;box-shadow:1px 1px 0 #fff,inset 1px 1px 0 #fff;"><b style="transform:scaleX(1.38)">DVD</b></div>
<div class="bd" style="left:1118px;top:376px;width:27px;height:9px;border:1px solid #8c8c8c;color:#a0a0a0;box-shadow:1px 1px 0 #fff,inset 1px 1px 0 #fff;"><b style="transform:scaleX(1.38)">CVD</b></div>
<span class="t" style="left:899px;top:392px;transform:scaleX(0.880);color:#222;">1</span>
<div style="left:908px;top:392px;width:171px;height:11px;border-top:1px solid #9a9a9a;border-left:1px solid #9a9a9a;border-right:1px solid #fff;border-bottom:1px solid #fff;background:#f0f0f0;"></div>
<div class="bd" style="left:1087px;top:392px;width:27px;height:9px;border:1px solid #8c8c8c;color:#a0a0a0;box-shadow:1px 1px 0 #fff,inset 1px 1px 0 #fff;"><b style="transform:scaleX(1.40)">4:3</b></div>
<div class="bd" style="left:1118px;top:392px;width:27px;height:9px;border:1px solid #8c8c8c;color:#a0a0a0;box-shadow:1px 1px 0 #fff,inset 1px 1px 0 #fff;"><b style="transform:scaleX(1.40)">16:9</b></div>
<span class="t" style="left:899px;top:414px;transform:scaleX(0.880);color:#222;">2</span>
<div style="left:908px;top:412px;width:208px;height:12px;border-top:1px solid #9a9a9a;border-left:1px solid #9a9a9a;border-right:1px solid #fff;border-bottom:1px solid #fff;background:#f0f0f0;"></div>
<span class="t" style="left:1129px;top:414px;transform:scaleX(0.879);color:#222;text-decoration:underline;">info</span>
</body></html>
